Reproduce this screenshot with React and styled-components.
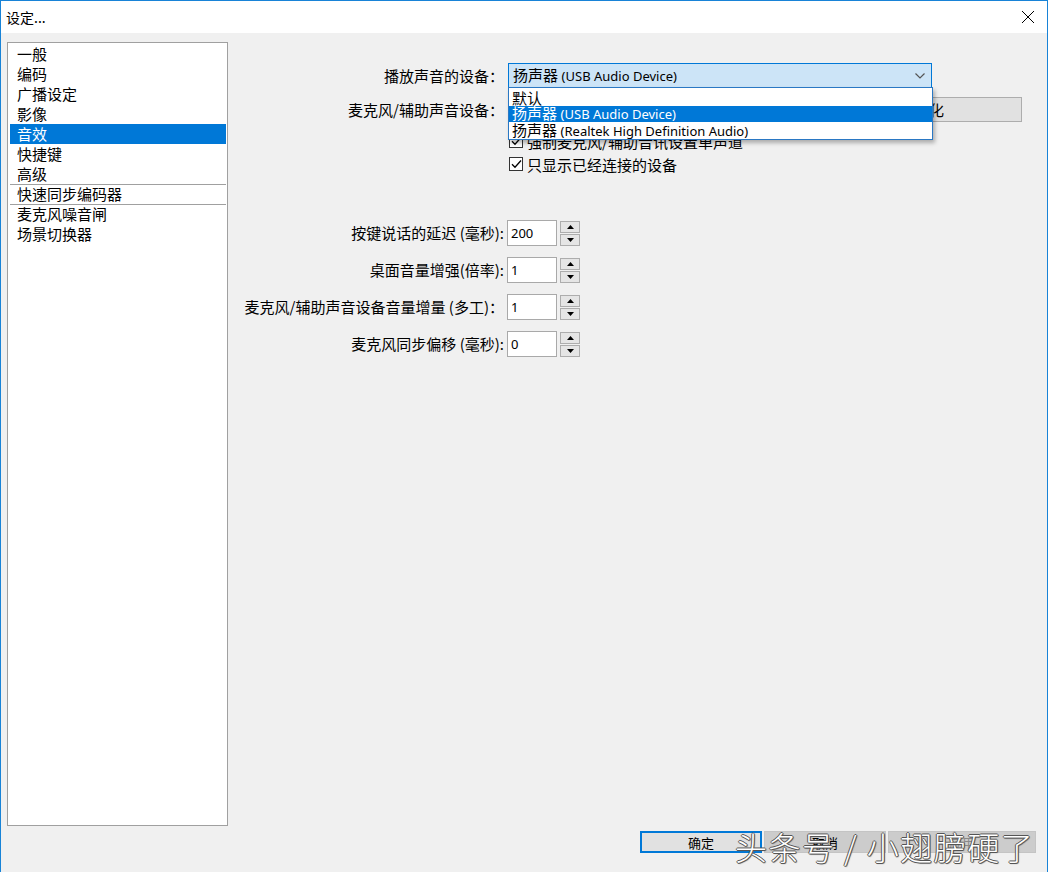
import styled, { createGlobalStyle } from "styled-components"

const GlobalStyle = createGlobalStyle`
  html, body {
    margin: 0;
    padding: 0;
    background: #ffffff;
  }
  body {
    font-family: "Noto Sans CJK SC", "Noto Sans", sans-serif;
    color: #000;
  }
  * { box-sizing: border-box; }
`

const Window = styled.div`
  position: relative;
  width: 1048px;
  height: 872px;
  border-top: 1px solid #1883d7;
  border-left: 1px solid #1883d7;
  border-right: 1px solid #1883d7;
  background: #f0f0f0;
  display: flex;
  flex-direction: column;
  overflow: hidden;
`

const TitleBar = styled.div`
  height: 32px;
  background: #ffffff;
  display: flex;
  align-items: center;
  justify-content: space-between;
  padding: 0 12px 0 5px;
  font-size: 14px;
  flex-shrink: 0;
`

const Close = styled.div`
  width: 14px;
  height: 14px;
  display: flex;
`

const Body = styled.div`
  display: flex;
  padding-top: 9px;
  height: 793px;
  flex-shrink: 0;
`

const Sidebar = styled.div`
  margin-left: 6px;
  width: 221px;
  height: 784px;
  background: #ffffff;
  border: 1px solid #a0a0a0;
  padding: 1px 1px 0 2px;
`

const Item = styled.div`
  height: 20px;
  font-size: 15px;
  padding-left: 7px;
  white-space: nowrap;
  background: ${p => (p.$active ? "#0078d7" : "transparent")};
  color: ${p => (p.$active ? "#ffffff" : "#000000")};
  border-top: ${p => (p.$sep ? "1px solid #a0a0a0" : "none")};
  line-height: ${p => (p.$sep ? "18px" : "19px")};
`

const Main = styled.div`
  flex: 1;
  padding-top: 21px;
  display: flex;
  flex-direction: column;
`

const TopForm = styled.div`
  display: grid;
  grid-template-columns: 276px auto;
  column-gap: 4px;
  row-gap: 9px;
  align-items: center;
`

const Label = styled.div`
  font-size: 15px;
  text-align: right;
  white-space: nowrap;
  line-height: 20px;
`

const ComboWrap = styled.div`
  position: relative;
  width: 424px;
  height: 25px;
`

const Combo = styled.div`
  height: 25px;
  background: #cce4f7;
  border: 1px solid #0078d7;
  display: flex;
  align-items: center;
  justify-content: space-between;
  padding: 0 6px 0 4px;
`

const Latin = styled.span`
  font-family: "Noto Sans", "Open Sans", sans-serif;
  font-size: 13px;
`

const Cn = styled.span`
  font-size: 15px;
`

const ItemText = styled.span`
  white-space: nowrap;
  line-height: 17px;
`

const Dropdown = styled.div`
  position: absolute;
  top: 24px;
  left: 0;
  width: 425px;
  background: #ffffff;
  border: 1px solid #2a78c4;
  box-shadow: 2px 3px 4px rgba(0, 0, 0, 0.28);
  z-index: 5;
  padding-top: 1px;
`

const Option = styled.div`
  height: 16.5px;
  padding-left: 3px;
  display: flex;
  align-items: center;
  background: ${p => (p.$selected ? "#0078d7" : "#ffffff")};
  color: ${p => (p.$selected ? "#ffffff" : "#000000")};
`

const MicBox = styled.div`
  width: 514px;
  height: 25px;
  background: #e1e1e1;
  border: 1px solid #adadad;
  font-size: 15px;
  display: flex;
  align-items: center;
  padding-left: 420px;
`

const Checks = styled.div`
  margin-top: 9px;
  margin-left: 281px;
  display: flex;
  flex-direction: column;
  gap: 3px;
`

const CheckRow = styled.div`
  height: 20px;
  display: flex;
  align-items: center;
  gap: 4px;
  font-size: 15px;
  white-space: nowrap;
`

const Box = styled.div`
  width: 14px;
  height: 14px;
  border: 1px solid #333;
  background: #fff;
  display: flex;
  align-items: center;
  justify-content: center;
`

const SpinForm = styled.div`
  margin-top: 46px;
  display: grid;
  grid-template-columns: 276px auto;
  column-gap: 3px;
  row-gap: 11px;
  align-items: center;
`

const Spinner = styled.div`
  display: flex;
  gap: 3px;
  height: 26px;
`

const Input = styled.div`
  width: 50px;
  height: 26px;
  background: #fff;
  border: 1px solid #a9a9a9;
  padding-left: 3px;
  display: flex;
  align-items: center;
  font-family: "Noto Sans", sans-serif;
  font-size: 13px;
`

const Arrows = styled.div`
  width: 20px;
  display: flex;
  flex-direction: column;
  gap: 1px;
  padding-top: 1px;
`

const ArrowBtn = styled.div`
  flex: 1;
  background: #e5e5e5;
  border: 1px solid #adadad;
  display: flex;
  align-items: center;
  justify-content: center;
`

const Footer = styled.div`
  display: flex;
  justify-content: flex-end;
  gap: 2px;
  padding-right: 11px;
  margin-top: 5px;
`

const Button = styled.div`
  width: ${p => p.$w || 122}px;
  height: 22px;
  background: ${p => (p.$primary ? "#e1e1e1" : "#cccccc")};
  border: ${p => (p.$primary ? "2px solid #0078d7" : "1px solid #c4c4c4")};
  display: flex;
  align-items: center;
  justify-content: center;
  font-size: 13px;
  color: ${p => (p.$disabled ? "#8a8a8a" : "#000")};
`

const Watermark = styled.div`
  position: absolute;
  left: 734px;
  top: 822px;
  font-size: 32px;
  font-weight: 300;
  color: #ffffff;
  white-space: nowrap;
  letter-spacing: 1.5px;
  text-shadow: 1px 0 0 #555, -1px 0 0 #555, 0 1px 0 #555, 0 -1px 0 #555,
    1px 1px 1px #666;
  z-index: 10;
`

const navItems = [
  { t: "一般" },
  { t: "编码" },
  { t: "广播设定" },
  { t: "影像" },
  { t: "音效", active: true },
  { t: "快捷键" },
  { t: "高级" },
  { t: "快速同步编码器", sep: true },
  { t: "麦克风噪音闸", sep: true },
  { t: "场景切换器" },
]

const spins = [
  { label: "按键说话的延迟 (毫秒):", value: "200" },
  { label: "桌面音量增强(倍率):", value: "1" },
  { label: "麦克风/辅助声音设备音量增量 (多工)：", value: "1" },
  { label: "麦克风同步偏移 (毫秒):", value: "0" },
]

function Check() {
  return (
    <Box>
      <svg width="11" height="10" viewBox="0 0 11 10">
        <path d="M1 5.2 L4 8.2 L10 1.5" fill="none" stroke="#000" strokeWidth="1.3" />
      </svg>
    </Box>
  )
}

function Tri({ up }) {
  return (
    <svg width="7" height="4" viewBox="0 0 7 4">
      <path d={up ? "M0 4 L3.5 0 L7 4 Z" : "M0 0 L3.5 4 L7 0 Z"} fill="#000" />
    </svg>
  )
}

function App() {
  return (
    <>
      <GlobalStyle />
      <Window>
        <TitleBar>
          <span>设定...</span>
          <Close>
            <svg width="14" height="14" viewBox="0 0 14 14">
              <path d="M1 1 L13 13 M13 1 L1 13" stroke="#000" strokeWidth="1" />
            </svg>
          </Close>
        </TitleBar>
        <Body>
          <Sidebar>
            {navItems.map(n => (
              <Item key={n.t} $active={n.active} $sep={n.sep}>
                {n.t}
              </Item>
            ))}
          </Sidebar>
          <Main>
            <TopForm>
              <Label>播放声音的设备：</Label>
              <ComboWrap>
                <Combo>
                  <ItemText>
                    <Cn>扬声器</Cn> <Latin>(USB Audio Device)</Latin>
                  </ItemText>
                  <svg width="10" height="6" viewBox="0 0 10 6">
                    <path d="M0.5 0.5 L5 5 L9.5 0.5" fill="none" stroke="#555" strokeWidth="1.2" />
                  </svg>
                </Combo>
                <Dropdown>
                  <Option>
                    <ItemText><Cn>默认</Cn></ItemText>
                  </Option>
                  <Option $selected>
                    <ItemText>
                      <Cn>扬声器</Cn> <Latin>(USB Audio Device)</Latin>
                    </ItemText>
                  </Option>
                  <Option>
                    <ItemText>
                      <Cn>扬声器</Cn> <Latin>(Realtek High Definition Audio)</Latin>
                    </ItemText>
                  </Option>
                </Dropdown>
              </ComboWrap>
              <Label>麦克风/辅助声音设备：</Label>
              <MicBox>化</MicBox>
            </TopForm>
            <Checks>
              <CheckRow>
                <Check />
                强制麦克风/辅助音讯设置单声道
              </CheckRow>
              <CheckRow>
                <Check />
                只显示已经连接的设备
              </CheckRow>
            </Checks>
            <SpinForm>
              {spins.map(s => (
                <>
                  <Label key={s.label + "l"}>{s.label}</Label>
                  <Spinner key={s.label + "s"}>
                    <Input>{s.value}</Input>
                    <Arrows>
                      <ArrowBtn><Tri up /></ArrowBtn>
                      <ArrowBtn><Tri /></ArrowBtn>
                    </Arrows>
                  </Spinner>
                </>
              ))}
            </SpinForm>
          </Main>
        </Body>
        <Footer>
          <Button $primary>确定</Button>
          <Button>取消</Button>
          <Button $w={148} $disabled>应用</Button>
        </Footer>
        <Watermark>头条号 / 小翅膀硬了</Watermark>
      </Window>
    </>
  )
}

export default App
